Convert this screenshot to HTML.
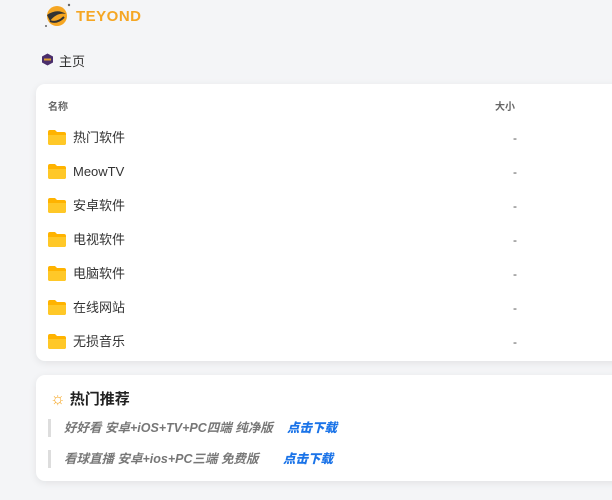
<!DOCTYPE html>
<html><head><meta charset="utf-8"><style>
body{margin:0;width:612px;height:500px;overflow:hidden;background:#f4f5f7;font-family:"Liberation Sans","Noto Sans CJK SC",sans-serif;position:relative}
.abs{position:absolute}
.card{position:absolute;left:36px;width:600px;background:#fff;border-radius:9px;box-shadow:0 2px 8px rgba(0,0,0,.08)}
.row{position:absolute;left:12px;height:20px;font-size:13px;color:#333;line-height:20px}
.row svg{position:absolute;left:0;top:2px}
.row span{position:absolute;left:25px;white-space:nowrap}
.dash{position:absolute;font-size:12px;color:#555}
.rec{position:absolute;left:12px;height:18px;border-left:3px solid #ddd;padding-left:13px;font-size:12.5px;font-style:italic;font-weight:bold;color:#777;line-height:18px;white-space:nowrap}
.rec b{color:#1a73e8;position:absolute}
</style></head><body>
<svg class="abs" style="left:42px;top:2px" width="32" height="26" viewBox="0 0 32 26"><circle cx="15" cy="14" r="10" fill="#f5a623"/><path d="M5 13 Q15 6 24 12 Q15 10 8 19Z" fill="#333"/><path d="M8 19 Q15 22 22 15" stroke="#333" stroke-width="2" fill="none"/><circle cx="27" cy="3" r="1.2" fill="#666"/><circle cx="4" cy="24" r="1" fill="#666"/></svg>
<div class="abs" style="left:76px;top:8px;font-size:15px;font-weight:bold;color:#f5a623;letter-spacing:0.5px">TEYOND</div>
<svg class="abs" style="left:41px;top:53px" width="13" height="13" viewBox="0 0 13 13"><path d="M6.5 0.5 L12 3.5 V9.5 L6.5 12.5 L1 9.5 V3.5Z" fill="#4a2e6b"/><rect x="3" y="5.5" width="7" height="2" fill="#e0a030"/></svg>
<div class="abs" style="left:59px;top:51px;font-size:13px;color:#333">主页</div>
<div class="card" style="top:84px;height:277px">
<div class="abs" style="left:12px;top:14px;font-size:10px;color:#666;font-weight:bold">名称</div>
<div class="abs" style="left:459px;top:14px;font-size:10px;color:#666;font-weight:bold">大小</div>
</div>
<div class="card" style="top:375px;height:106px">
<div class="abs" style="left:14px;top:13px;font-size:15px;font-weight:bold;color:#222"><span style="color:#f5a623;font-weight:normal;font-size:17px">☼</span> 热门推荐</div>
<div class="rec" style="top:44px">好好看 安卓+iOS+TV+PC四端 纯净版<b style="left:236px">点击下载</b></div>
<div class="rec" style="top:75px">看球直播 安卓+ios+PC三端 免费版<b style="left:232px">点击下载</b></div>
</div>
<div id="rows"></div>
<script>
var n=["热门软件","MeowTV","安卓软件","电视软件","电脑软件","在线网站","无损音乐"],h="";
n.forEach(function(t,i){var y=128+i*34;h+='<div class="row" style="left:48px;top:'+y+'px;width:480px"><svg width="18" height="15" viewBox="0 0 18 15"><path d="M0 2 Q0 0 2 0 H7 L9 2 H16 Q18 2 18 4 V13 Q18 15 16 15 H2 Q0 15 0 13Z" fill="#ffb300"/><path d="M0 5 H18 V13 Q18 15 16 15 H2 Q0 15 0 13Z" fill="#ffc828"/></svg><span>'+t+'</span><div class="dash" style="left:465px">-</div></div>';});
document.getElementById("rows").innerHTML=h;
</script>
</body></html>
